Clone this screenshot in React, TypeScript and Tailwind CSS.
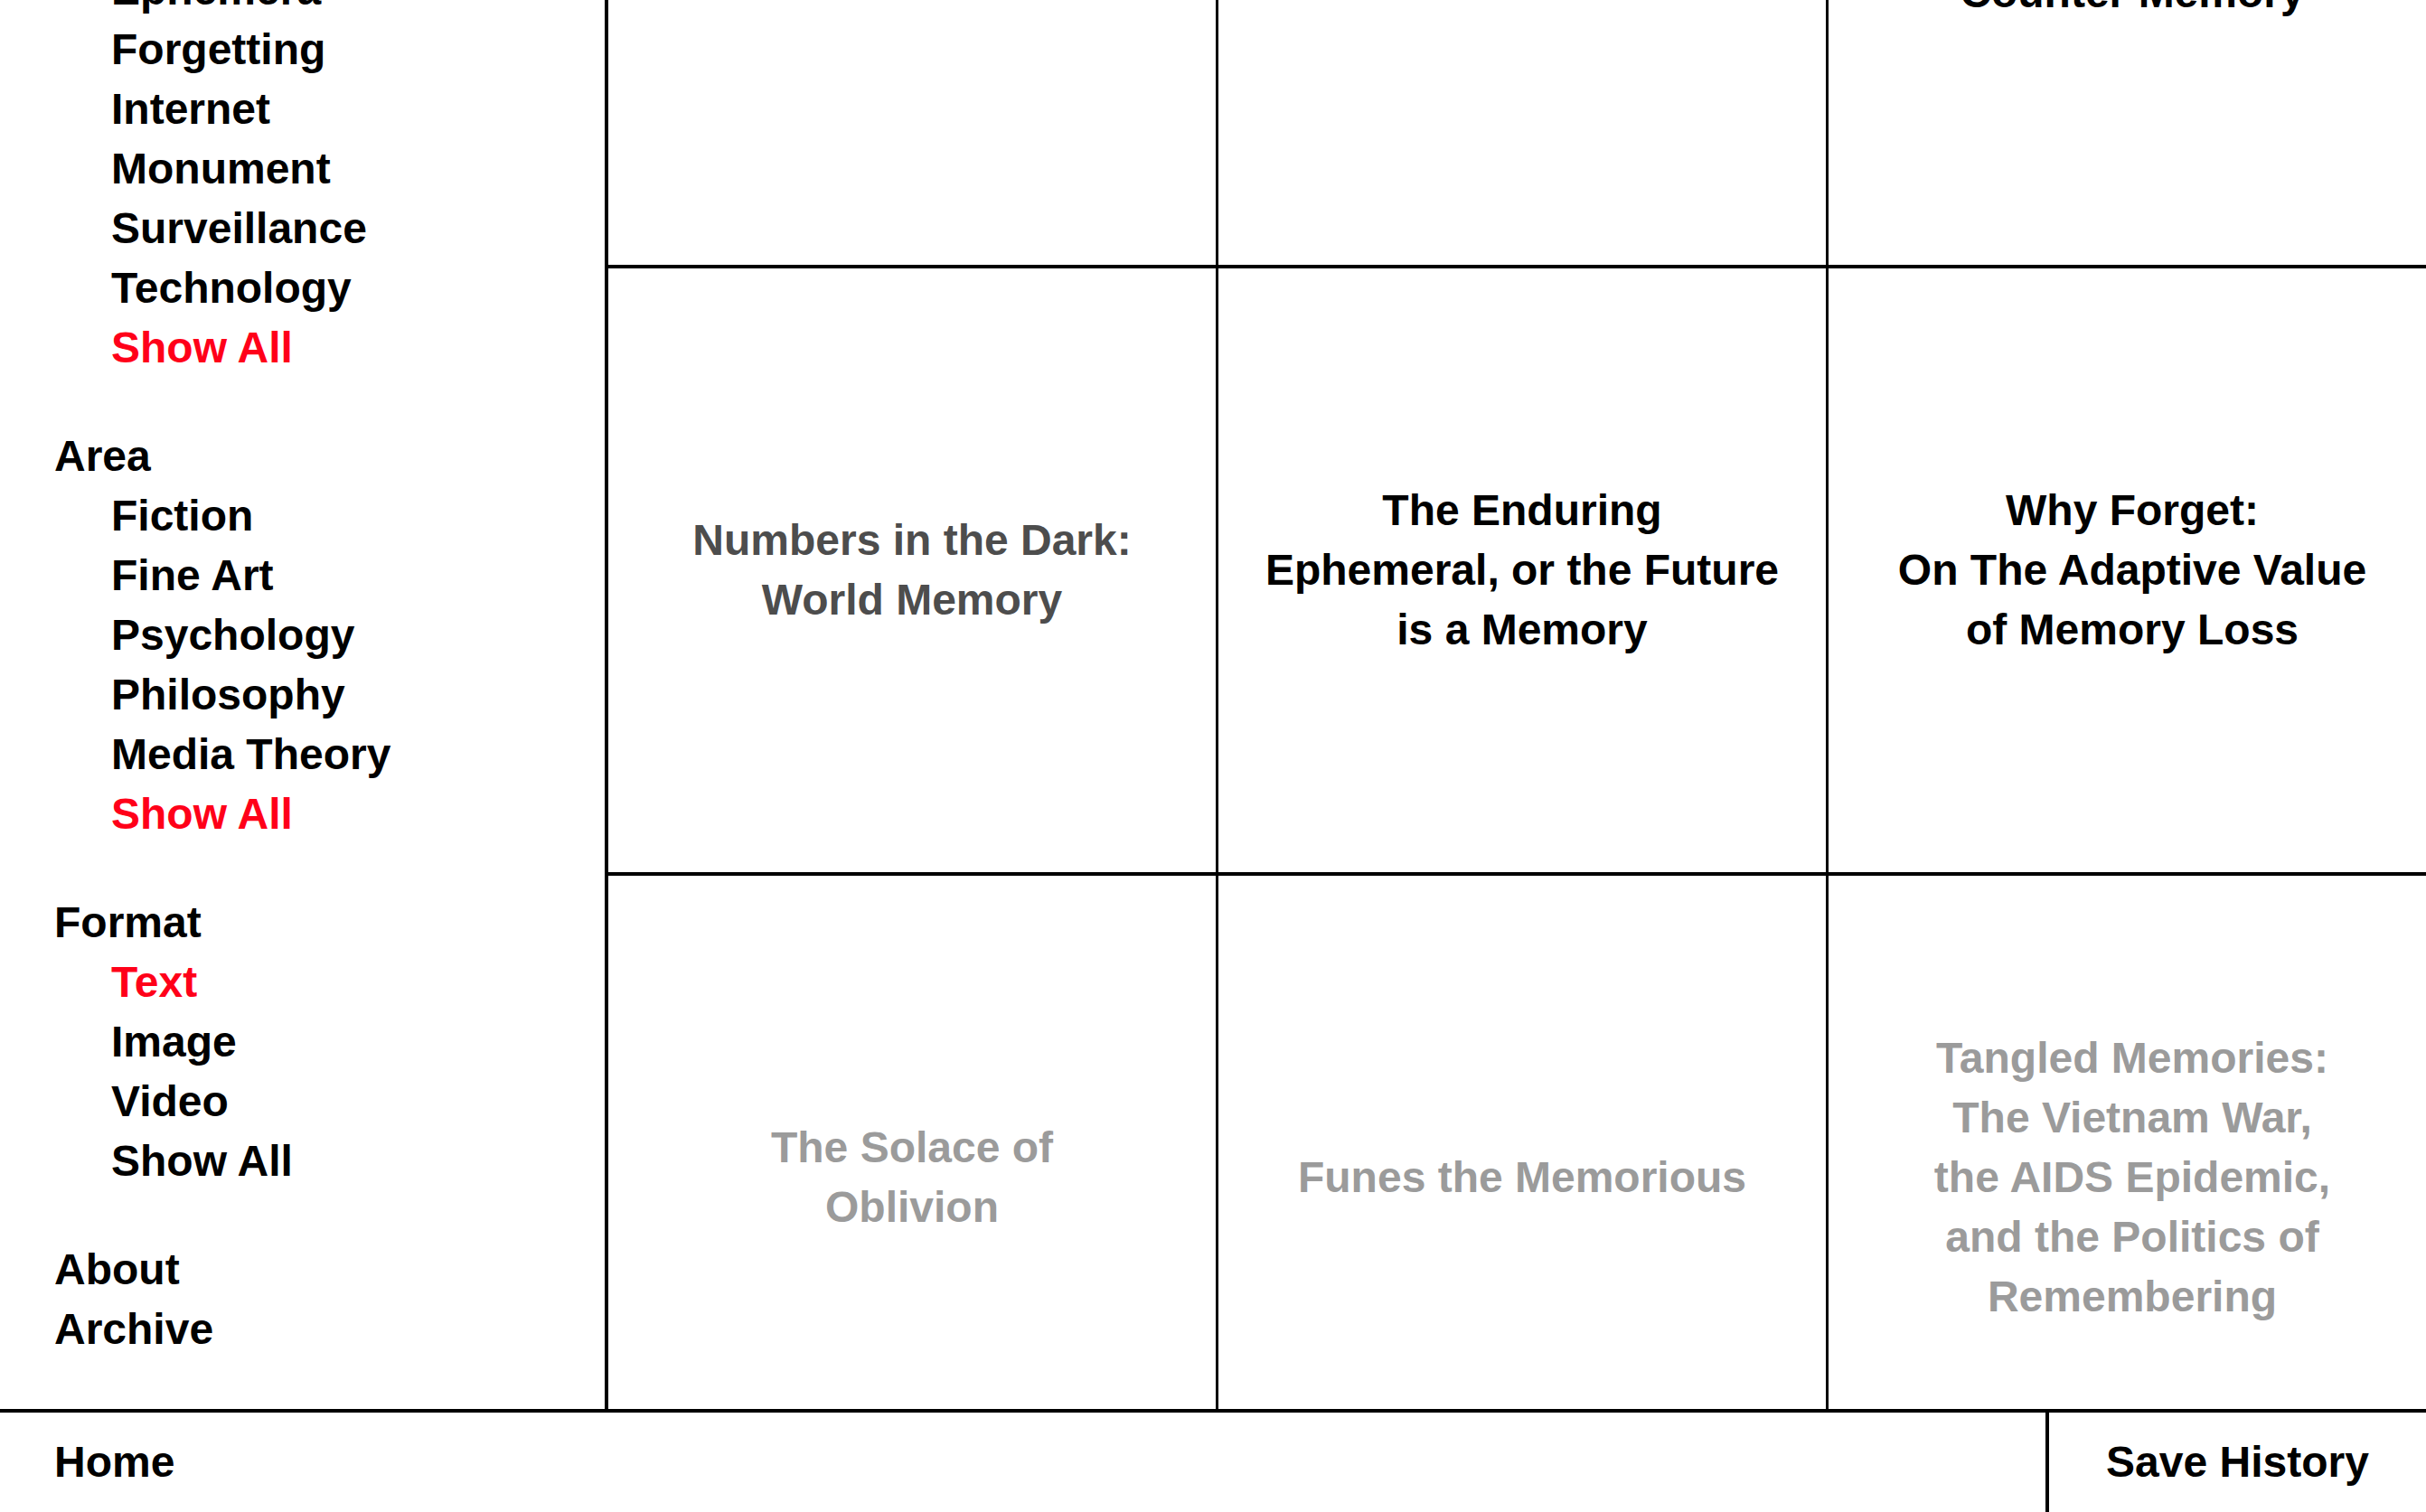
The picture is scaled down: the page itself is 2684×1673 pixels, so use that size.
import { useLayoutEffect, useRef } from "react";

type Cell = { lines: string[]; tone: "black" | "dark" | "light" };

const filters = [
  {
    title: "Theme",
    items: ["Archive", "Body", "Collective", "Ephemera", "Forgetting", "Internet", "Monument", "Surveillance", "Technology"],
    active: "Show All",
  },
  {
    title: "Area",
    items: ["Fiction", "Fine Art", "Psychology", "Philosophy", "Media Theory"],
    active: "Show All",
  },
  {
    title: "Format",
    items: ["Text", "Image", "Video"],
    active: "Text",
  },
];

const cells: Cell[] = [
  { lines: ["Mnemosyne"], tone: "black" },
  { lines: ["The Art of Memory"], tone: "dark" },
  { lines: ["Language,", "Counter Memory"], tone: "black" },
  { lines: ["Numbers in the Dark:", "World Memory"], tone: "dark" },
  { lines: ["The Enduring", "Ephemeral, or the Future", "is a Memory"], tone: "black" },
  { lines: ["Why Forget:", "On The Adaptive Value", "of Memory Loss"], tone: "black" },
  { lines: ["The Solace of", "Oblivion"], tone: "light" },
  { lines: ["Funes the Memorious"], tone: "light" },
  { lines: ["Tangled Memories:", "The Vietnam War,", "the AIDS Epidemic,", "and the Politics of", "Remembering"], tone: "light" },
];

const toneClass = {
  black: "text-black",
  dark: "text-[#4d4d4d]",
  light: "text-[#9b9b9b]",
};

function Sidebar() {
  return (
    <aside className="w-[673px] shrink-0 border-r-4 border-black pl-[60px] pt-[67px]">
      {filters.map((group) => {
        const links = [...group.items, "Show All"];
        return (
          <div key={group.title} className="mb-[54px]">
            <div>{group.title}</div>
            <ul className="ml-[63px]">
              {links.map((item) => (
                <li key={item} className={item === group.active ? "text-[#ff0019]" : "text-black"}>
                  {item}
                </li>
              ))}
            </ul>
          </div>
        );
      })}
      <div>About</div>
      <div>Archive</div>
    </aside>
  );
}

function Grid() {
  return (
    <main className="grid grid-cols-[repeat(3,675px)] shrink-0">
      {cells.map((cell, i) => (
        <div
          key={i}
          className={`h-[672px] border-r-[3px] border-b-4 border-black flex items-center justify-center text-center px-[40px] ${toneClass[cell.tone]}`}
        >
          <p>
            {cell.lines.map((line, j) => (
              <span key={j} className="block">
                {line}
              </span>
            ))}
          </p>
        </div>
      ))}
    </main>
  );
}

export default function App() {
  const scrollRef = useRef<HTMLDivElement>(null);

  // the list and grid are shown part-way scrolled
  useLayoutEffect(() => {
    if (scrollRef.current) scrollRef.current.scrollTop = 375;
  }, []);

  return (
    <div className="h-screen w-full flex flex-col overflow-hidden bg-white text-black font-['Liberation_Sans',Arial,sans-serif] font-bold text-[48px] leading-[66px]">
      <div ref={scrollRef} className="flex-1 min-h-0 overflow-hidden">
        <div className="flex">
          <Sidebar />
          <Grid />
        </div>
      </div>
      <footer className="h-[114px] shrink-0 border-t-4 border-black flex items-stretch justify-between">
        <a className="pl-[60px] flex items-center">Home</a>
        <button className="w-[421px] border-l-4 border-black flex items-center justify-center font-bold">
          Save History
        </button>
      </footer>
    </div>
  );
}
